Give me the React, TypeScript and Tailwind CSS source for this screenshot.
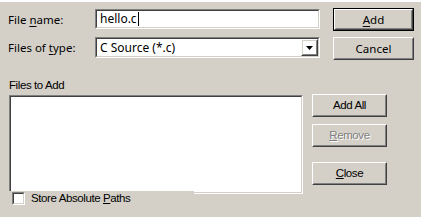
import React from "react";

const tahoma = { fontFamily: '"Noto Sans", "DejaVu Sans", sans-serif' };
const mssans = { fontFamily: '"Liberation Sans", Arial, sans-serif' };

function Sunken({ className, children }: { className: string; children?: React.ReactNode }) {
  return (
    <div className={`border border-t-[#808080] border-l-[#808080] border-b-white border-r-white ${className}`}>
      <div className="w-full h-full border border-t-[#404040] border-l-[#404040] border-b-[#d4d0c8] border-r-[#d4d0c8] bg-white">
        {children}
      </div>
    </div>
  );
}

function Raised({ className, children, def }: { className: string; children?: React.ReactNode; def?: boolean }) {
  const inner = (
    <div className="w-full h-full border border-t-white border-l-white border-b-[#404040] border-r-[#404040]">
      <div className="w-full h-full border border-t-[#d4d0c8] border-l-[#d4d0c8] border-b-[#808080] border-r-[#808080] flex items-center justify-center">
        {children}
      </div>
    </div>
  );
  if (def) {
    return <div className={`border border-black ${className}`}>{inner}</div>;
  }
  return <div className={className}>{inner}</div>;
}

export default function App() {
  return (
    <div className="w-[421px] h-[217px] bg-[#d4d0c8] border-t-2 border-white text-black overflow-hidden">
      {/* Row 1 */}
      <div className="flex items-start mt-[6px]">
        <div className="w-[95px] pl-[8px] h-[23px] flex items-center text-[11.5px] whitespace-pre" style={tahoma}>
          {"File "}<span className="underline underline-offset-2">n</span>ame:
        </div>
        <Sunken className="w-[225px] h-[20px] mt-[1px]">
          <div className="flex items-center h-full pl-[3px] text-[12px]" style={tahoma}>
            hello.c<span className="inline-block w-px h-[14px] bg-black ml-[1px]" />
          </div>
        </Sunken>
        <Raised def className="ml-[13px] w-[81px] h-[23px]">
          <span className="text-[11.5px]" style={tahoma}>
            <span className="underline underline-offset-2">A</span>dd
          </span>
        </Raised>
      </div>
      {/* Row 2 */}
      <div className="flex items-start mt-[6px]">
        <div className="w-[95px] pl-[8px] h-[21px] flex items-center text-[11.5px] whitespace-pre" style={tahoma}>
          {"Files of "}<span className="underline underline-offset-2">t</span>ype:
        </div>
        <Sunken className="w-[225px] h-[21px]">
          <div className="flex items-center h-full">
            <div className="flex-1 pl-[3px] text-[12px]" style={tahoma}>C Source (*.c)</div>
            <Raised className="w-[17px] h-[17px]">
              <svg width="7" height="4" viewBox="0 0 7 4">
                <path d="M0 0H7L3.5 4Z" fill="#000" />
              </svg>
            </Raised>
          </div>
        </Sunken>
        <Raised className="ml-[13px] w-[81px] h-[23px]">
          <span className="text-[11.5px]" style={tahoma}>Cancel</span>
        </Raised>
      </div>
      {/* Files to Add label */}
      <div className="mt-[19px] pl-[9px] h-[13px] leading-[13px] text-[11.5px] tracking-[-0.4px]" style={mssans}>
        Files to Add
      </div>
      <div className="flex items-start mt-[3px]">
        <div className="flex flex-col">
          <Sunken className="ml-[9px] w-[294px] h-[99px]" />
          <div className="relative -mt-[3px] ml-[9px] w-[185px] h-[14px] bg-[#d4d0c8] flex items-center">
            <div className="ml-[3px] w-[13px] h-[13px] border border-t-[#808080] border-l-[#808080] border-b-white border-r-white">
              <div className="w-full h-full border border-t-[#404040] border-l-[#404040] border-b-[#d4d0c8] border-r-[#d4d0c8] bg-white" />
            </div>
            <span className="ml-[6px] text-[11.5px] tracking-[-0.4px] leading-[13px]" style={mssans}>
              Store Absolute <span className="underline underline-offset-1">P</span>aths
            </span>
          </div>
        </div>
        <div className="flex flex-col ml-[9px] -mt-[1px]">
          <Raised className="w-[75px] h-[23px]">
            <span className="text-[11.5px] tracking-[-0.4px]" style={mssans}>Add All</span>
          </Raised>
          <Raised className="w-[75px] h-[23px] mt-[7px]">
            <span className="text-[11.5px] tracking-[-0.4px] text-[#808080] [text-shadow:1px_1px_0_#fff]" style={mssans}>
              <span className="underline underline-offset-1">R</span>emove
            </span>
          </Raised>
          <Raised className="w-[75px] h-[23px] mt-[15px]">
            <span className="text-[11.5px] tracking-[-0.4px]" style={mssans}>
              <span className="underline underline-offset-1">C</span>lose
            </span>
          </Raised>
        </div>
      </div>
    </div>
  );
}
